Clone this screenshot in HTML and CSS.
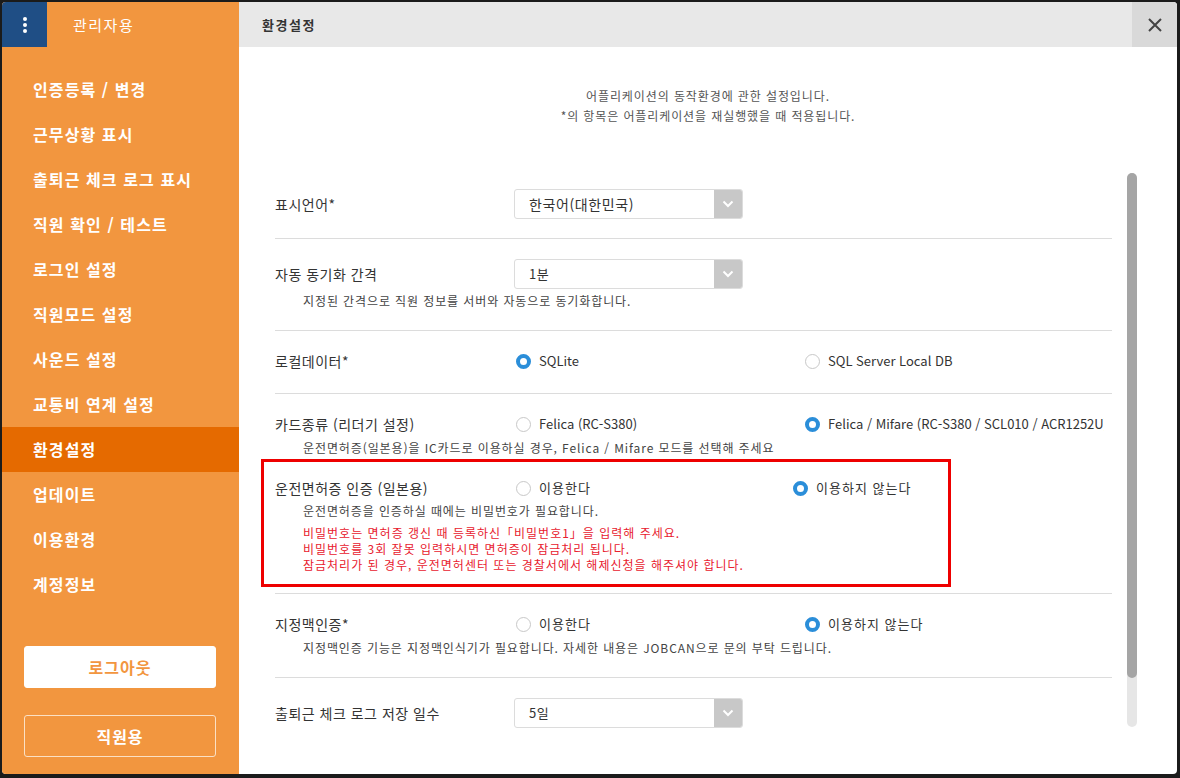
FILE: index.html
```html
<!DOCTYPE html>
<html lang="ko">
<head>
<meta charset="utf-8">
<title>환경설정</title>
<link rel="stylesheet" href="styles.css">
</head>
<body>
<div class="app">
  <aside class="sidebar">
    <div class="side-head">
      <div class="menu-btn"><span></span><span></span><span></span></div>
      <div class="side-title">관리자용</div>
    </div>
    <nav class="nav">
      <div class="nav-item">인증등록 / 변경</div>
      <div class="nav-item">근무상황 표시</div>
      <div class="nav-item">출퇴근 체크 로그 표시</div>
      <div class="nav-item">직원 확인 / 테스트</div>
      <div class="nav-item">로그인 설정</div>
      <div class="nav-item">직원모드 설정</div>
      <div class="nav-item">사운드 설정</div>
      <div class="nav-item">교통비 연계 설정</div>
      <div class="nav-item active">환경설정</div>
      <div class="nav-item">업데이트</div>
      <div class="nav-item">이용환경</div>
      <div class="nav-item">계정정보</div>
    </nav>
    <div class="btn btn-logout">로그아웃</div>
    <div class="btn btn-staff">직원용</div>
  </aside>
  <main class="main">
    <div class="topbar">
      <div class="top-title">환경설정</div>
      <div class="close-btn">
        <svg width="14" height="14" viewBox="0 0 14 14"><path d="M1 1 L13 13 M13 1 L1 13" stroke="#444" stroke-width="2" fill="none"/></svg>
      </div>
    </div>
    <div class="intro">
      <div>어플리케이션의 동작환경에 관한 설정입니다.</div>
      <div>*의 항목은 어플리케이션을 재실행했을 때 적용됩니다.</div>
    </div>
    <div class="list-wrap">
      <div class="list">
        <div class="row row-select">
          <div class="main-line">
            <div class="label">표시언어*</div>
            <div class="select"><span class="select-text big">한국어(대한민국)</span><span class="arrow"><svg width="12" height="8" viewBox="0 0 12 8"><polyline points="1.5,1.5 6,6 10.5,1.5" stroke="#fff" stroke-width="2" fill="none"/></svg></span></div>
          </div>
        </div>
        <div class="row row-select">
          <div class="main-line">
            <div class="label">자동 동기화 간격</div>
            <div class="select"><span class="select-text">1분</span><span class="arrow"><svg width="12" height="8" viewBox="0 0 12 8"><polyline points="1.5,1.5 6,6 10.5,1.5" stroke="#fff" stroke-width="2" fill="none"/></svg></span></div>
          </div>
          <div class="desc">지정된 간격으로 직원 정보를 서버와 자동으로 동기화합니다.</div>
        </div>
        <div class="row row-radio">
          <div class="main-line">
            <div class="label">로컬데이터*</div>
            <div class="options">
              <div class="opt"><span class="radio on"></span>SQLite</div>
              <div class="opt"><span class="radio"></span>SQL Server Local DB</div>
            </div>
          </div>
        </div>
        <div class="row row-radio row-open">
          <div class="main-line">
            <div class="label">카드종류 (리더기 설정)</div>
            <div class="options">
              <div class="opt"><span class="radio"></span>Felica (RC-S380)</div>
              <div class="opt"><span class="radio on"></span>Felica / Mifare (RC-S380 / SCL010 / ACR1252U)</div>
            </div>
          </div>
          <div class="desc d3">운전면허증(일본용)을 IC카드로 이용하실 경우, Felica / Mifare 모드를 선택해 주세요</div>
        </div>
        <div class="row row-license">
          <div class="highlight"></div>
          <div class="main-line">
            <div class="label">운전면허증 인증 (일본용)</div>
            <div class="options opts-narrow">
              <div class="opt ko"><span class="radio"></span>이용한다</div>
              <div class="opt ko"><span class="radio on"></span>이용하지 않는다</div>
            </div>
          </div>
          <div class="desc">운전면허증을 인증하실 때에는 비밀번호가 필요합니다.</div>
          <div class="warn">
            <div>비밀번호는 면허증 갱신 때 등록하신「비밀번호1」을 입력해 주세요.</div>
            <div>비밀번호를 3회 잘못 입력하시면 면허증이 잠금처리 됩니다.</div>
            <div>잠금처리가 된 경우, 운전면허센터 또는 경찰서에서 해제신청을 해주셔야 합니다.</div>
          </div>
        </div>
        <div class="row row-radio row-desc">
          <div class="main-line">
            <div class="label">지정맥인증*</div>
            <div class="options">
              <div class="opt ko"><span class="radio"></span>이용한다</div>
              <div class="opt ko"><span class="radio on"></span>이용하지 않는다</div>
            </div>
          </div>
          <div class="desc d3">지정맥인증 기능은 지정맥인식기가 필요합니다. 자세한 내용은 JOBCAN으로 문의 부탁 드립니다.</div>
        </div>
        <div class="row row-select">
          <div class="main-line">
            <div class="label">출퇴근 체크 로그 저장 일수</div>
            <div class="select"><span class="select-text">5일</span><span class="arrow"><svg width="12" height="8" viewBox="0 0 12 8"><polyline points="1.5,1.5 6,6 10.5,1.5" stroke="#fff" stroke-width="2" fill="none"/></svg></span></div>
          </div>
          <div class="desc">설정한 일수가 지난 출퇴근 체크 로그는 단말기에서 자동으로 삭제됩니다.</div>
        </div>
      </div>
      <div class="scrollbar"><div class="thumb"></div></div>
    </div>
  </main>
</div>
</body>
</html>
```

FILE: styles.css
```css
* { box-sizing: border-box; }
html, body { margin: 0; padding: 0; }
body {
  background: #1b1b1b;
  font-family: "Noto Sans CJK KR", "Noto Sans", sans-serif;
  width: 1180px;
  height: 778px;
  overflow: hidden;
}
.app {
  margin: 2px 3px 4px 2px;
  width: 1175px;
  height: 772px;
  display: flex;
  background: #fff;
  border-radius: 4px;
  overflow: hidden;
}
.sidebar {
  width: 237px;
  flex: none;
  background: #f2963f;
  display: flex;
  flex-direction: column;
}
.side-head {
  height: 45px;
  display: flex;
  align-items: center;
}
.menu-btn {
  width: 45px;
  height: 45px;
  background: #1f4e85;
  display: flex;
  flex-direction: column;
  align-items: center;
  justify-content: center;
  gap: 2px;
}
.menu-btn span {
  width: 4px;
  height: 4px;
  border-radius: 50%;
  background: #fff;
}
.side-title {
  color: #fff;
  font-size: 15px;
  margin-left: 26px;
  line-height: 20px;
  letter-spacing: 1.5px;
}
.nav { padding-top: 20px; }
.nav-item {
  height: 45px;
  line-height: 45px;
  padding-left: 31px;
  color: #fff;
  font-size: 16px;
  font-weight: 700;
  letter-spacing: 1.1px;
}
.nav-item.active { background: #e56a00; }
.btn {
  margin-left: 22px;
  width: 192px;
  height: 42px;
  line-height: 40px;
  border-radius: 3px;
  text-align: center;
  font-size: 16px;
  font-weight: 700;
  letter-spacing: 1px;
}
.btn-logout {
  margin-top: 39px;
  background: #fff;
  color: #f2963f;
  border: 1px solid #fff;
}
.btn-staff {
  margin-top: 27px;
  color: #fff;
  border: 1px solid #fbe0c4;
}
.main {
  flex: 1;
  display: flex;
  flex-direction: column;
  min-width: 0;
}
.topbar {
  height: 45px;
  background: #e8e8e8;
  display: flex;
  align-items: center;
}
.top-title {
  flex: 1;
  padding-left: 23px;
  font-size: 13px;
  font-weight: 700;
  color: #333;
  letter-spacing: 1.5px;
}
.close-btn {
  width: 45px;
  height: 45px;
  background: #d9d9d9;
  display: flex;
  align-items: center;
  justify-content: center;
}
.intro {
  padding-top: 39px;
  text-align: center;
  font-size: 12px;
  line-height: 20px;
  color: #555;
  letter-spacing: 0.9px;
}
.list-wrap {
  margin-top: 43px;
  height: 567px;
  display: flex;
  padding-left: 22px;
}
.list {
  width: 851px;
  height: 565px;
  padding-left: 14px;
  overflow: hidden;
}
.scrollbar {
  margin-left: 15px;
  margin-top: 4px;
  width: 10px;
  height: 554px;
  border-radius: 5px;
  background: #e6e6e6;
}
.thumb {
  height: 505px;
  border-radius: 5px;
  background: #a5a5a5;
}
.row {
  border-bottom: 1px solid #dcdcdc;
  position: relative;
}
.row-select { padding: 20px 0 19px; }
.row-radio { padding: 19px 0 21px; }
.row-radio.row-desc { padding-bottom: 19px; }
.row-open { border-bottom: none; padding-bottom: 0; }
.row-license { padding: 19px 0 20px; }
.main-line {
  display: flex;
  align-items: center;
}
.label {
  width: 239px;
  flex: none;
  font-size: 14px;
  color: #333;
  line-height: 22px;
  letter-spacing: 0.5px;
}
.select {
  width: 229px;
  height: 30px;
  border: 1px solid #dcdcdc;
  border-radius: 3px;
  display: flex;
  overflow: hidden;
}
.select-text {
  flex: 1;
  padding-left: 14px;
  font-size: 13px;
  line-height: 28px;
  color: #333;
  letter-spacing: 0.6px;
}
.select-text.big { font-size: 14px; }
.arrow {
  width: 28px;
  background: #c8c8c8;
  display: flex;
  align-items: center;
  justify-content: center;
}
.options {
  display: flex;
  width: 590px;
  overflow: hidden;
  white-space: nowrap;
}
.opt {
  width: 289px;
  flex: none;
  display: flex;
  align-items: center;
  font-size: 13px;
  color: #333;
  line-height: 22px;
}
.opt.ko { letter-spacing: 1px; }
.opt:last-child { width: auto; }
.opts-narrow .opt:first-child { width: 277px; }
.radio {
  width: 15px;
  height: 15px;
  border-radius: 50%;
  border: 1px solid #c8c8c8;
  margin: 0 8px 0 2px;
  flex: none;
  background: #fff;
}
.radio.on {
  border: 4px solid #2b8ed9;
  background: #fff;
}
.desc {
  margin-top: 2px;
  padding-left: 28px;
  font-size: 12px;
  line-height: 20px;
  color: #444;
  white-space: nowrap;
  letter-spacing: 0.9px;
}
.desc.d3 { margin-top: 3px; }
.warn {
  margin-top: 4px;
  padding-left: 28px;
  font-size: 12px;
  line-height: 16px;
  color: #e8202e;
  letter-spacing: 1px;
}
.highlight {
  position: absolute;
  left: -14px;
  top: 1px;
  width: 690px;
  height: 128px;
  border: 3px solid #ee0000;
}
```
